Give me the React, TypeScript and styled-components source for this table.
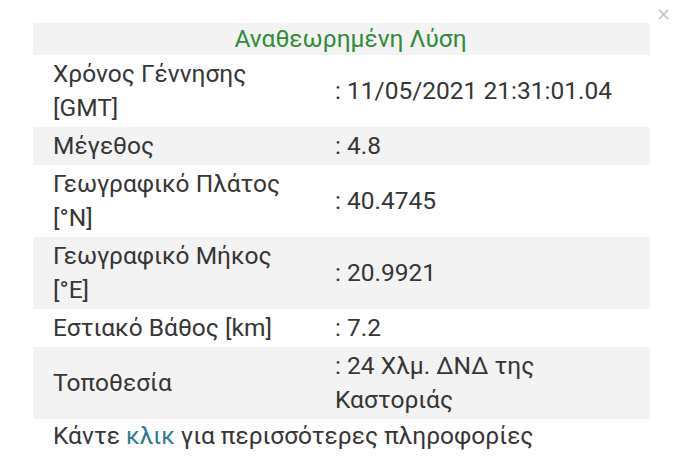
import React from 'react';
import styled, { createGlobalStyle } from 'styled-components';

const GlobalStyle = createGlobalStyle`
  html, body { margin: 0; padding: 0; background: #ffffff; }
  body { font-family: Roboto, "Noto Sans", Arial, sans-serif; }
`;

interface InfoRow {
  label: string[];
  value: string[];
}

const rows: InfoRow[] = [
  { label: ['Χρόνος Γέννησης', '[GMT]'], value: [': 11/05/2021 21:31:01.04'] },
  { label: ['Μέγεθος'], value: [': 4.8'] },
  { label: ['Γεωγραφικό Πλάτος', '[°N]'], value: [': 40.4745'] },
  { label: ['Γεωγραφικό Μήκος', '[°E]'], value: [': 20.9921'] },
  { label: ['Εστιακό Βάθος [km]'], value: [': 7.2'] },
  { label: ['Τοποθεσία'], value: [': 24 Χλμ. ΔΝΔ της', 'Καστοριάς'] },
];

const Popup = styled.div`
  position: relative;
  width: 679px;
  height: 471px;
  padding: 23px 29px 0 33px;
  box-sizing: border-box;
  color: #363636;
  font-size: 24.5px;
`;

const Close = styled.span`
  position: absolute;
  top: 5px;
  right: 8px;
  font-size: 18px;
  line-height: 18px;
  color: #c4c4c4;
  font-family: "DejaVu Sans", sans-serif;
`;

const Table = styled.div`
  display: flex;
  flex-direction: column;
  width: 617px;
`;

const Header = styled.div`
  background: #f3f3f3;
  color: #2f8c37;
  text-align: center;
  height: 32px;
  line-height: 32px;
  padding-left: 18px;
`;

const Row = styled.div<{ $shaded: boolean }>`
  display: grid;
  grid-template-columns: 282px 1fr;
  align-items: center;
  padding: 2px 0 2px 20px;
  background: ${({ $shaded }) => ($shaded ? '#f3f3f3' : '#ffffff')};
  line-height: 34px;
`;

const Cell = styled.div`
  display: flex;
  flex-direction: column;
`;

const Footer = styled.div`
  padding-left: 20px;
  line-height: 34px;
`;

const Link = styled.span`
  color: #2a7f8e;
`;

export default function App() {
  return (
    <>
      <GlobalStyle />
      <Popup>
        <Close>×</Close>
        <Table>
          <Header>Αναθεωρημένη Λύση</Header>
          {rows.map((r, i) => (
            <Row key={i} $shaded={i % 2 === 1}>
              <Cell>{r.label.map((l) => <span key={l}>{l}</span>)}</Cell>
              <Cell>{r.value.map((v) => <span key={v}>{v}</span>)}</Cell>
            </Row>
          ))}
          <Footer>
            Κάντε <Link>κλικ</Link> για περισσότερες πληροφορίες
          </Footer>
        </Table>
      </Popup>
    </>
  );
}
